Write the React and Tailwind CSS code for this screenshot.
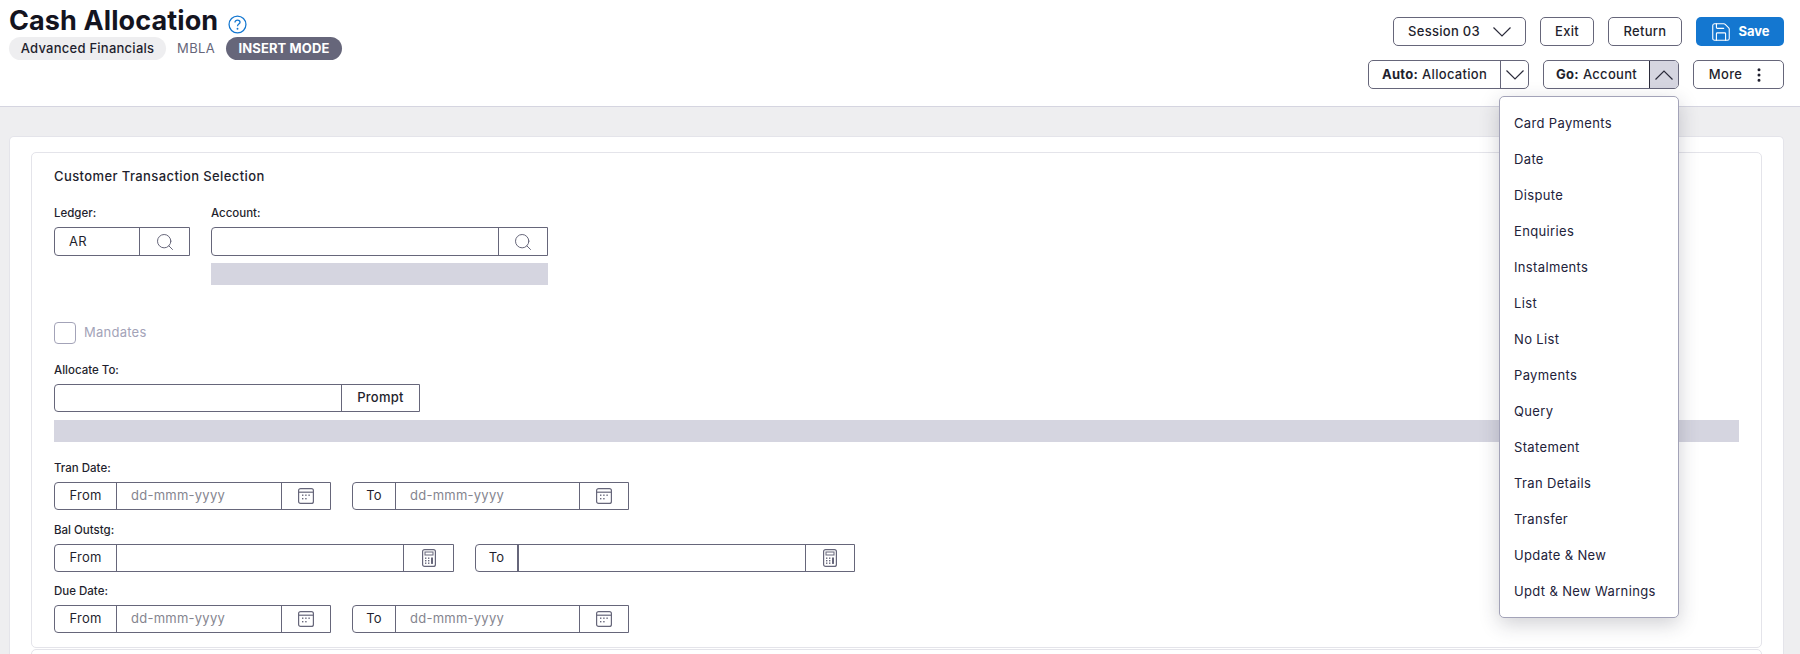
import React from "react";
import { Search, Save, EllipsisVertical } from "lucide-react";

const Chevron = ({ up, w = 18, h = 10, color = "#2b2b3a" }) => (
  <svg width={w} height={h} viewBox="0 0 18 10" fill="none" stroke={color} strokeWidth="1.2">
    <path d={up ? "M0.5 9.5 L9 1 L17.5 9.5" : "M0.5 0.5 L9 9 L17.5 0.5"} />
  </svg>
);

const Help = () => (
  <svg width="19" height="19" viewBox="0 0 18 18" fill="none">
    <circle cx="9" cy="9" r="8" stroke="#1477d0" strokeWidth="1.2" />
    <path d="M6.6 7.1 C6.6 5.6 7.7 4.8 9 4.8 C10.4 4.8 11.4 5.7 11.4 6.9 C11.4 8.6 9 8.7 9 10.6" stroke="#1477d0" strokeWidth="1.2" />
    <circle cx="9" cy="13" r="0.9" fill="#1477d0" />
  </svg>
);

const CalendarIcon = () => (
  <svg width="16" height="16" viewBox="0 0 16 16" fill="none">
    <rect x="0.6" y="0.6" width="14.8" height="14.8" rx="2" stroke="#66667a" strokeWidth="1.2" />
    <path d="M0.6 4.2 H15.4" stroke="#66667a" strokeWidth="1.2" />
    <g fill="#66667a">
      <rect x="4" y="6.5" width="1.4" height="1.4" />
      <rect x="7.2" y="6.5" width="1.4" height="1.4" />
      <rect x="10.4" y="6.5" width="1.4" height="1.4" />
      <rect x="4" y="10" width="1.4" height="1.4" />
      <rect x="7.2" y="10" width="1.4" height="1.4" />
    </g>
  </svg>
);

const CalculatorIcon = () => (
  <svg width="14" height="18" viewBox="0 0 14 18" fill="none">
    <rect x="0.6" y="0.6" width="12.8" height="16.8" rx="2" stroke="#66667a" strokeWidth="1.2" />
    <rect x="3" y="3" width="8" height="3" stroke="#66667a" strokeWidth="1" />
    <g fill="#66667a">
      <rect x="3" y="8.5" width="1.4" height="1.4" />
      <rect x="6" y="8.5" width="1.4" height="1.4" />
      <rect x="3" y="11" width="1.4" height="1.4" />
      <rect x="6" y="11" width="1.4" height="1.4" />
      <rect x="3" y="13.5" width="1.4" height="1.4" />
      <rect x="6" y="13.5" width="1.4" height="1.4" />
      <rect x="9" y="8.5" width="2" height="6.4" />
    </g>
  </svg>
);

const Btn = ({ className = "", children }) => (
  <button className={`h-[29px] rounded-[5px] border border-[#66667a] bg-white flex items-center justify-center text-[13px] font-medium tracking-[0.3px] text-[#1f1f2e] ${className}`}>
    {children}
  </button>
);

const Label = ({ className = "", children }) => (
  <div className={`h-[16px] pt-[2px] flex items-center text-[11.5px] font-medium text-[#1f1f2e] ${className}`}>{children}</div>
);

const Group = ({ className = "", children }) => (
  <div className={`flex items-stretch border border-[#66667a] rounded-l-[4px] bg-white ${className}`}>{children}</div>
);

const Cell = ({ className = "", children }) => (
  <div className={`flex items-center border-r border-[#66667a] last:border-r-0 shrink-0 text-[13px] tracking-[0.25px] text-[#1f1f2e] ${className}`}>{children}</div>
);

const DateRow = () => (
  <div className="flex gap-[21px] mt-[6px]">
    <Group className="w-[277px] h-[28px]">
      <Cell className="w-[62px] justify-center">From</Cell>
      <Cell className="w-[165px] pl-[14px] text-[#85858f]">dd-mmm-yyyy</Cell>
      <Cell className="flex-1 justify-center"><CalendarIcon /></Cell>
    </Group>
    <Group className="w-[277px] h-[28px]">
      <Cell className="w-[43px] justify-center">To</Cell>
      <Cell className="w-[184px] pl-[14px] text-[#85858f]">dd-mmm-yyyy</Cell>
      <Cell className="flex-1 justify-center"><CalendarIcon /></Cell>
    </Group>
  </div>
);

const items = ["Card Payments", "Date", "Dispute", "Enquiries", "Instalments", "List", "No List", "Payments", "Query", "Statement", "Tran Details", "Transfer", "Update & New", "Updt & New Warnings"];

export default function App() {
  return (
    <div className="h-[654px] overflow-hidden bg-[#eeeef0] font-['Inter','Noto_Sans',sans-serif] text-[#1f1f2e]">
      <header className="h-[107px] bg-white border-b border-[#d5d5e0] flex justify-between pl-[9px] pr-[16px]">
        <div className="pt-[4px]">
          <div className="flex items-center h-[33px]">
            <h1 className="text-[27px] leading-[33px] font-bold tracking-[0.1px] text-[#14141f]">Cash Allocation</h1>
            <span className="ml-[10px] mt-[7px]"><Help /></span>
          </div>
          <div className="flex items-center h-[23px] text-[13px]">
            <span className="h-[23px] w-[157px] rounded-full bg-[#eeeef0] flex items-center justify-center font-medium tracking-[0.25px]">Advanced Financials</span>
            <span className="ml-[11px] w-[38px] text-[#66667a] tracking-[0.4px]">MBLA</span>
            <span className="ml-[11px] h-[23px] w-[116px] rounded-full bg-[#66667a] text-white font-bold flex items-center justify-center text-[13px] tracking-[0.1px]">INSERT MODE</span>
          </div>
        </div>
        <div className="pt-[17px] flex flex-col gap-[14px] items-end">
          <div className="flex gap-[14px]">
            <Btn className="w-[133px] gap-[13px] tracking-[0.1px]">Session 03 <Chevron /></Btn>
            <Btn className="w-[54px]">Exit</Btn>
            <Btn className="w-[74px]">Return</Btn>
            <button className="h-[29px] w-[88px] rounded-[5px] bg-[#1477d0] text-white flex items-center justify-center gap-[6px] text-[13px] font-bold">
              <Save size={22} strokeWidth={1.2} /> Save
            </button>
          </div>
          <div className="flex gap-[14px]">
            <div className="w-[161px] h-[29px] rounded-[5px] border border-[#66667a] flex bg-white">
              <span className="w-[132px] flex items-center justify-center border-r border-[#66667a] text-[13px] tracking-[0.3px]"><b className="font-bold">Auto:</b>&nbsp;<span className="font-medium">Allocation</span></span>
              <span className="flex-1 flex items-center justify-center"><Chevron /></span>
            </div>
            <div className="relative w-[136px] h-[29px] rounded-[5px] border border-[#66667a] flex bg-white">
              <span className="w-[106px] flex items-center justify-center border-r border-[#2b2b3a] text-[13px] tracking-[0.3px]"><b className="font-bold">Go:</b>&nbsp;<span className="font-medium">Account</span></span>
              <span className="flex-1 flex items-center justify-center bg-[#d5d5e0] rounded-r-[4px]"><Chevron up /></span>
              <div className="absolute right-[-1px] top-[35px] w-[180px] h-[522px] z-10 bg-white rounded-[5px] border border-[#a3a3b8] shadow-[0_6px_20px_rgba(40,40,60,0.22)] pt-[8px] pb-[8px] pl-[14px]">
                {items.map((t) => (
                  <div key={t} className="h-[36px] pt-[1px] flex items-center text-[13px] tracking-[0.35px] text-[#22223a] whitespace-nowrap">{t}</div>
                ))}
              </div>
            </div>
            <Btn className="w-[91px] gap-[8px]">More <EllipsisVertical size={18} strokeWidth={2} /></Btn>
          </div>
        </div>
      </header>

      <main className="pt-[29px] pl-[9px] pr-[16px]">
        <div className="bg-white rounded-t-[5px] border border-[#e4e4ea] border-b-0 px-[21px] pt-[15px] h-[540px]">
          <section className="h-[496px] rounded-[5px] border border-[#e4e4ea] pl-[22px] pr-[22px] pt-[14px]">
            <div className="h-[20px] flex items-center text-[13px] font-medium tracking-[0.4px]">Customer Transaction Selection</div>

            <div className="flex gap-[21px] mt-[18px]">
              <div>
                <Label>Ledger:</Label>
                <Group className="mt-[6px] w-[136px] h-[29px]">
                  <Cell className="w-[85px] pl-[14px]">AR</Cell>
                  <Cell className="flex-1 justify-center"><Search size={20} strokeWidth={1.2} color="#66667a" /></Cell>
                </Group>
              </div>
              <div>
                <Label>Account:</Label>
                <Group className="mt-[6px] w-[337px] h-[29px]">
                  <Cell className="w-[287px]"></Cell>
                  <Cell className="flex-1 justify-center"><Search size={20} strokeWidth={1.2} color="#66667a" /></Cell>
                </Group>
                <div className="mt-[7px] h-[22px] bg-[#d5d5e0]"></div>
              </div>
            </div>

            <div className="flex items-center mt-[37px] h-[22px]">
              <span className="w-[22px] h-[22px] rounded-[4px] border border-[#a3a3b8] bg-white"></span>
              <span className="ml-[8px] text-[13px] text-[#a3a3b8] tracking-[0.25px]">Mandates</span>
            </div>

            <Label className="mt-[18px]">Allocate To:</Label>
            <Group className="mt-[6px] w-[366px] h-[28px]">
              <Cell className="w-[287px]"></Cell>
              <Cell className="flex-1 justify-center font-medium">Prompt</Cell>
            </Group>
            <div className="mt-[8px] h-[22px] bg-[#d5d5e0]"></div>

            <Label className="mt-[18px]">Tran Date:</Label>
            <DateRow />

            <Label className="mt-[12px]">Bal Outstg:</Label>
            <div className="flex gap-[21px] mt-[6px]">
              <Group className="w-[400px] h-[28px]">
                <Cell className="w-[62px] justify-center">From</Cell>
                <Cell className="w-[287px]"></Cell>
                <Cell className="flex-1 justify-center"><CalculatorIcon /></Cell>
              </Group>
              <Group className="w-[380px] h-[28px]">
                <Cell className="w-[43px] justify-center border-r-2">To</Cell>
                <Cell className="w-[287px]"></Cell>
                <Cell className="flex-1 justify-center"><CalculatorIcon /></Cell>
              </Group>
            </div>

            <Label className="mt-[11px]">Due Date:</Label>
            <DateRow />
          </section>
          <section className="h-[40px] mt-[1px] rounded-t-[5px] border border-[#e4e4ea]"></section>
        </div>
      </main>
    </div>
  );
}
